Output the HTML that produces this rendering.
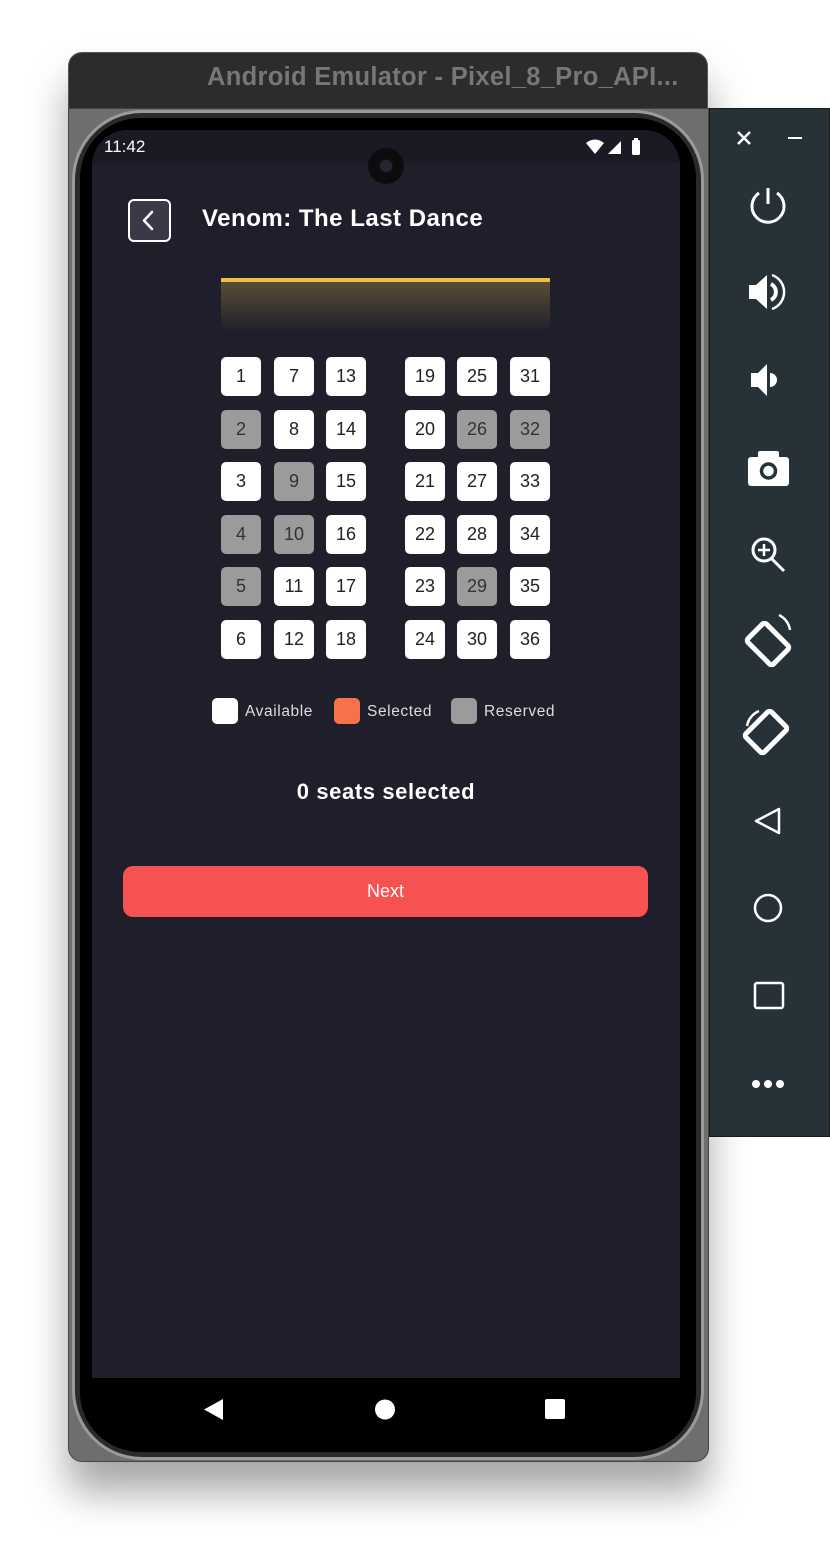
<!DOCTYPE html>
<html><head><meta charset="utf-8"><style>
*{margin:0;padding:0;box-sizing:border-box}
body{width:830px;height:1546px;background:#fff;position:relative;overflow:hidden;font-family:"Liberation Sans",sans-serif}
.a{position:absolute}
.seat{position:absolute;width:40px;height:39px;border-radius:5px;background:#fff;color:#222;font-size:18px;display:flex;align-items:center;justify-content:center}
.r{background:#9b9b9b;color:#333}
.lg{color:#ddd;font-size:15.5px;letter-spacing:0.6px}
</style></head><body>
<div class="a" style="left:68px;top:52px;width:640px;height:1410px;border-radius:14px;box-shadow:0 30px 40px rgba(0,0,0,0.35)"></div>
<div class="a" style="left:68px;top:52px;width:640px;height:57px;background:#2d2c2b;border-radius:14px 14px 0 0;border:1px solid #555"></div>
<div class="a" style="left:207px;top:63px;font-size:25.5px;font-weight:bold;color:#777;white-space:nowrap;letter-spacing:0.3px">Android Emulator - Pixel_8_Pro_API...</div>
<div class="a" style="left:68px;top:108px;width:641px;height:1354px;background:#6e6e6e;border-radius:0 0 14px 14px;border:1px solid #444"></div>
<div class="a" style="left:72px;top:110px;width:632px;height:1350px;background:#2a2a2a;border-radius:70px;border:3px solid #9a9a9a"></div>
<div class="a" style="left:80px;top:118px;width:616px;height:1334px;background:#000;border-radius:60px"></div>
<div class="a" style="left:92px;top:130px;width:588px;height:1248px;background:#1f1e2b;border-radius:36px 36px 0 0;overflow:hidden">
 <div class="a" style="left:0;top:0;width:588px;height:33px;background:#1a1924"></div>
</div>
<div class="a" style="left:104px;top:137px;color:#fff;font-size:17px">11:42</div>
<svg class="a" style="left:585px;top:138px" width="60" height="18"><path d="M1 5 Q10 -2 19 5 L10 16Z" fill="#fff"/><path d="M23 16 L36 3 L36 16Z" fill="#fff"/><rect x="47" y="2" width="8" height="15" rx="1.5" fill="#fff"/><rect x="49" y="0" width="4" height="3" fill="#fff"/></svg>
<div class="a" style="left:368px;top:148px;width:36px;height:36px;border-radius:50%;background:#0c0c10"></div>
<div class="a" style="left:378px;top:158px;width:16px;height:16px;border-radius:50%;background:#2a2230;border:2px solid #111"></div>
<div class="a" style="left:128px;top:199px;width:43px;height:43px;border:2px solid #fff;border-radius:6px;background:#3a3947"></div>
<svg class="a" style="left:128px;top:199px" width="43" height="43"><path d="M24 13 L16 21.5 L24 30" stroke="#fff" stroke-width="2.5" fill="none" stroke-linecap="round" stroke-linejoin="round"/></svg>
<div class="a" style="left:202px;top:205px;color:#fff;font-size:24px;font-weight:bold;letter-spacing:0.5px;white-space:nowrap">Venom: The Last Dance</div>
<div class="a" style="left:221px;top:278px;width:329px;height:4px;background:#f2bd45"></div>
<div class="a" style="left:221px;top:282px;width:329px;height:50px;background:linear-gradient(#5a4d36,#1f1e2b)"></div>
<div class="seat" style="left:221px;top:357px">1</div><div class="seat" style="left:274px;top:357px">7</div><div class="seat" style="left:326px;top:357px">13</div>
<div class="seat" style="left:405px;top:357px">19</div><div class="seat" style="left:457px;top:357px">25</div><div class="seat" style="left:510px;top:357px">31</div>
<div class="seat r" style="left:221px;top:410px">2</div><div class="seat" style="left:274px;top:410px">8</div><div class="seat" style="left:326px;top:410px">14</div>
<div class="seat" style="left:405px;top:410px">20</div><div class="seat r" style="left:457px;top:410px">26</div><div class="seat r" style="left:510px;top:410px">32</div>
<div class="seat" style="left:221px;top:462px">3</div><div class="seat r" style="left:274px;top:462px">9</div><div class="seat" style="left:326px;top:462px">15</div>
<div class="seat" style="left:405px;top:462px">21</div><div class="seat" style="left:457px;top:462px">27</div><div class="seat" style="left:510px;top:462px">33</div>
<div class="seat r" style="left:221px;top:515px">4</div><div class="seat r" style="left:274px;top:515px">10</div><div class="seat" style="left:326px;top:515px">16</div>
<div class="seat" style="left:405px;top:515px">22</div><div class="seat" style="left:457px;top:515px">28</div><div class="seat" style="left:510px;top:515px">34</div>
<div class="seat r" style="left:221px;top:567px">5</div><div class="seat" style="left:274px;top:567px">11</div><div class="seat" style="left:326px;top:567px">17</div>
<div class="seat" style="left:405px;top:567px">23</div><div class="seat r" style="left:457px;top:567px">29</div><div class="seat" style="left:510px;top:567px">35</div>
<div class="seat" style="left:221px;top:620px">6</div><div class="seat" style="left:274px;top:620px">12</div><div class="seat" style="left:326px;top:620px">18</div>
<div class="seat" style="left:405px;top:620px">24</div><div class="seat" style="left:457px;top:620px">30</div><div class="seat" style="left:510px;top:620px">36</div>
<div class="a" style="left:212px;top:698px;width:26px;height:26px;border-radius:5px;background:#fff"></div>
<div class="a lg" style="left:245px;top:703px">Available</div>
<div class="a" style="left:334px;top:698px;width:26px;height:26px;border-radius:5px;background:#f7714a"></div>
<div class="a lg" style="left:367px;top:703px">Selected</div>
<div class="a" style="left:451px;top:698px;width:26px;height:26px;border-radius:5px;background:#9b9b9b"></div>
<div class="a lg" style="left:484px;top:703px">Reserved</div>
<div class="a" style="left:92px;top:779px;width:588px;text-align:center;color:#fff;font-size:22px;font-weight:bold;letter-spacing:0.6px">0 seats selected</div>
<div class="a" style="left:123px;top:866px;width:525px;height:51px;border-radius:10px;background:#f75252;color:#fff;font-size:18px;display:flex;align-items:center;justify-content:center">Next</div>
<svg class="a" style="left:200px;top:1396px" width="380" height="28"><path d="M23 3 L23 24 L4 13.5Z" fill="#fff"/><ellipse cx="185" cy="13.5" rx="10" ry="10" fill="#fff"/><rect x="345" y="3" width="20" height="20" rx="2" fill="#fff"/></svg>
<div class="a" style="left:709px;top:108px;width:121px;height:1029px;background:#263238;border:1px solid #1a1a1a"></div>
<svg class="a" style="left:709px;top:108px" width="121" height="1029" fill="none" stroke="#fff" stroke-width="3">
<path d="M29 24 L41 36 M41 24 L29 36" stroke-width="2.5"/><path d="M79 30 L93 30" stroke-width="2"/>
<path d="M59 80 L59 96"/><path d="M50 85 A16 16 0 1 0 68 85"/>
<path d="M40 177 L47 177 L58 167 L58 201 L47 191 L40 191Z" fill="#fff" stroke="none"/><path d="M62 176 A9 9 0 0 1 62 192" stroke-width="4"/><path d="M63 167 A18 18 0 0 1 63 201" stroke-width="2.5"/>
<path d="M42 265 L49 265 L58 256 L58 288 L49 279 L42 279Z" fill="#fff" stroke="none"/><path d="M61 265 A7 7 0 0 1 61 279" fill="#fff" stroke="none"/>
<rect x="39" y="349" width="41" height="29" rx="3" fill="#fff" stroke="none"/><rect x="49" y="343" width="21" height="8" rx="2" fill="#fff" stroke="none"/><circle cx="59.5" cy="363" r="7" stroke="#263238" stroke-width="3.5"/>
<circle cx="55" cy="442" r="11"/><path d="M63 451 L75 463"/><path d="M55 436 L55 448 M49 442 L61 442" stroke-width="2.5"/>
<rect x="46" y="518" width="26" height="36" rx="3" stroke-width="5" transform="rotate(-45 59 536)"/><path d="M70 507 A20 20 0 0 1 81 522" stroke-width="2.5"/>
<rect x="44" y="606" width="26" height="36" rx="3" stroke-width="5" transform="rotate(45 57 624)"/><path d="M50 603 A20 20 0 0 0 38 618" stroke-width="2.5"/>
<path d="M70 701 L70 725 L47 713Z" stroke-width="2.5" stroke-linejoin="round"/>
<circle cx="59" cy="800" r="13" stroke-width="2.5"/>
<rect x="46" y="875" width="28" height="25" rx="2" stroke-width="2.5"/>
<circle cx="47" cy="976" r="4" fill="#fff" stroke="none"/><circle cx="59" cy="976" r="4" fill="#fff" stroke="none"/><circle cx="71" cy="976" r="4" fill="#fff" stroke="none"/>
</svg>
</body></html>
